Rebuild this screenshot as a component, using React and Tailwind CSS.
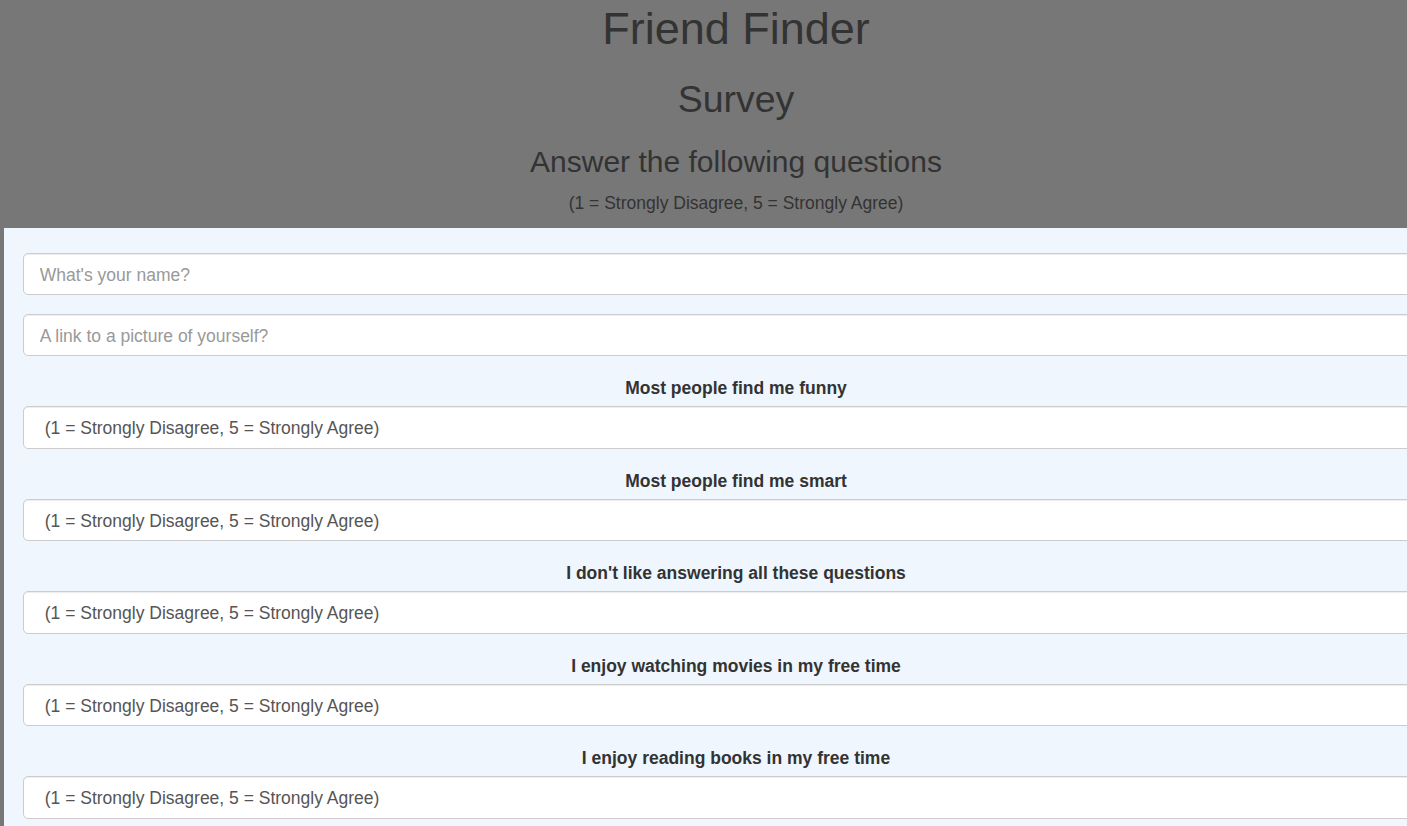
const questions = [
  'Most people find me funny',
  'Most people find me smart',
  "I don't like answering all these questions",
  'I enjoy watching movies in my free time',
  'I enjoy reading books in my free time',
]

const inputClass =
  'block w-full h-[42.5px] rounded-[5px] border border-[#ccc] bg-white pl-[16px] pr-[15px] text-[17.5px] text-[#555] shadow-[inset_0_1px_1px_rgba(0,0,0,0.075)] outline-none placeholder:text-[#999]'

export default function App() {
  return (
    <div className="h-[826px] w-full overflow-hidden bg-[#777777]" style={{ fontFamily: '"Liberation Sans", Arial, sans-serif' }}>
      <div className="w-[1472px] text-[#333]">
        <div className="flex flex-col items-center text-center">
          <h1 className="mt-[4px] text-[45px] leading-[50px] font-normal">Friend Finder</h1>
          <h2 className="mt-[25px] text-[37.5px] leading-[41px] font-normal">Survey</h2>
          <h3 className="mt-[24.5px] text-[30px] leading-[33px] font-normal">Answer the following questions</h3>
          <p className="mt-[13.5px] text-[17.5px] leading-[25px]">(1 = Strongly Disagree, 5 = Strongly Agree)</p>
        </div>

        <form className="mx-[4px] mt-[11.5px] bg-[#eff6fd] px-[18.75px] pt-[25px] pb-[20px]">
          <div className="mb-[18.75px]">
            <input className={`${inputClass} pt-[3px]`} placeholder="What's your name?" />
          </div>
          <div className="mb-[18.75px]">
            <input className={`${inputClass} pt-[2px]`} placeholder="A link to a picture of yourself?" />
          </div>
          {questions.map((q) => (
            <div key={q} className="mb-[18.75px]">
              <label className="mb-[5.25px] block pt-[1px] text-center text-[17.5px] leading-[25px] font-bold text-[#333]">{q}</label>
              <div className={`${inputClass} flex items-center pl-[21px] pt-[2px]`}>
                (1 = Strongly Disagree, 5 = Strongly Agree)
              </div>
            </div>
          ))}
        </form>
      </div>
    </div>
  )
}
